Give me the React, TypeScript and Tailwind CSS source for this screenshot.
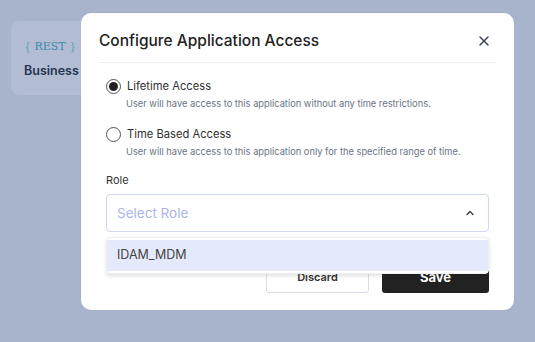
import { X, ChevronUp } from "lucide-react";

function RadioOption({
  checked,
  label,
  description,
}: {
  checked?: boolean;
  label: string;
  description: string;
}) {
  return (
    <div className="flex flex-col">
      <div className="flex items-center gap-[6px]">
        <span className="flex h-[15px] w-[15px] items-center justify-center rounded-full border border-[#555]">
          {checked ? <span className="h-[9px] w-[9px] rounded-full bg-[#222]" /> : null}
        </span>
        <span className="text-[11.2px] leading-4 text-[#2f2f2f]">{label}</span>
      </div>
      <div className="mt-[4px] pl-[20px] text-[9.3px] leading-3 text-[#6b7385]">{description}</div>
    </div>
  );
}

export default function App() {
  return (
    <div
      className="relative h-[342px] w-[535px] overflow-hidden bg-[#a8b4cc]"
      style={{ fontFamily: "Inter, 'Noto Sans', sans-serif" }}
    >
      <div className="ml-[11px] mt-[21px] flex h-[74px] w-[110px] flex-col rounded-lg bg-[#b2bdd3] pl-[13px] pt-[18px]">
        <div className="text-[11px] leading-4 text-[#3a8aa8]" style={{ fontFamily: "'DejaVu Serif', serif" }}>
          <span className="text-[#57a3b8]">{"{"}</span> REST <span className="text-[#57a3b8]">{"}"}</span>
        </div>
        <div className="mt-[8px] text-[12.5px] font-semibold leading-4 text-[#26334d]">Business</div>
      </div>

      <div className="absolute left-[81px] top-[13px] flex h-[297px] w-[433px] flex-col rounded-[10px] bg-white px-[18px] shadow-[0_0_2px_rgba(0,0,0,0.05)]">
        <div className="flex h-[50px] items-center justify-between border-b border-[#eceef2] pt-[7px]">
          <span className="text-[15.5px] font-medium text-[#222]">Configure Application Access</span>
          <X className="mr-[4px] h-[16px] w-[16px] text-[#3b4250]" strokeWidth={2.2} />
        </div>

        <div className="mt-[15px] flex flex-col gap-[16px] pl-[7px]">
          <RadioOption
            checked
            label="Lifetime Access"
            description="User will have access to this application without any time restrictions."
          />
          <RadioOption
            label="Time Based Access"
            description="User will have access to this application only for the specified range of time."
          />
        </div>

        <div className="mt-[14px] pl-[7px] text-[11px] leading-4 text-[#333]">Role</div>
        <div className="relative mx-[7px] mt-[6px]">
          <div className="flex h-[38px] items-center justify-between rounded-[4px] border border-[#cdd6f2] px-[10px]">
            <span className="text-[13.5px] text-[#aab6e6]">Select Role</span>
            <ChevronUp className="mr-[2px] h-[12px] w-[12px] text-[#333]" strokeWidth={2.5} />
          </div>
          <div className="absolute left-0 right-0 top-[43px] z-10 rounded-[4px] border border-[#eef0f4] bg-white py-[2px] shadow-[0_2px_4px_rgba(0,0,0,0.12)]">
            <div className="flex h-[31px] items-center bg-[#e4eafb] px-[10px] text-[12.5px] text-[#444]">IDAM_MDM</div>
          </div>
        </div>

        <div className="mt-[30px] flex justify-end gap-[13px] pr-[7px]">
          <button className="h-[31px] w-[103px] rounded-[3px] border border-[#d8dde8] bg-white text-[11px] font-semibold text-[#333]">
            Discard
          </button>
          <button className="h-[31px] w-[107px] rounded-[3px] bg-[#222] text-[13px] font-bold text-white">Save</button>
        </div>
      </div>
    </div>
  );
}
